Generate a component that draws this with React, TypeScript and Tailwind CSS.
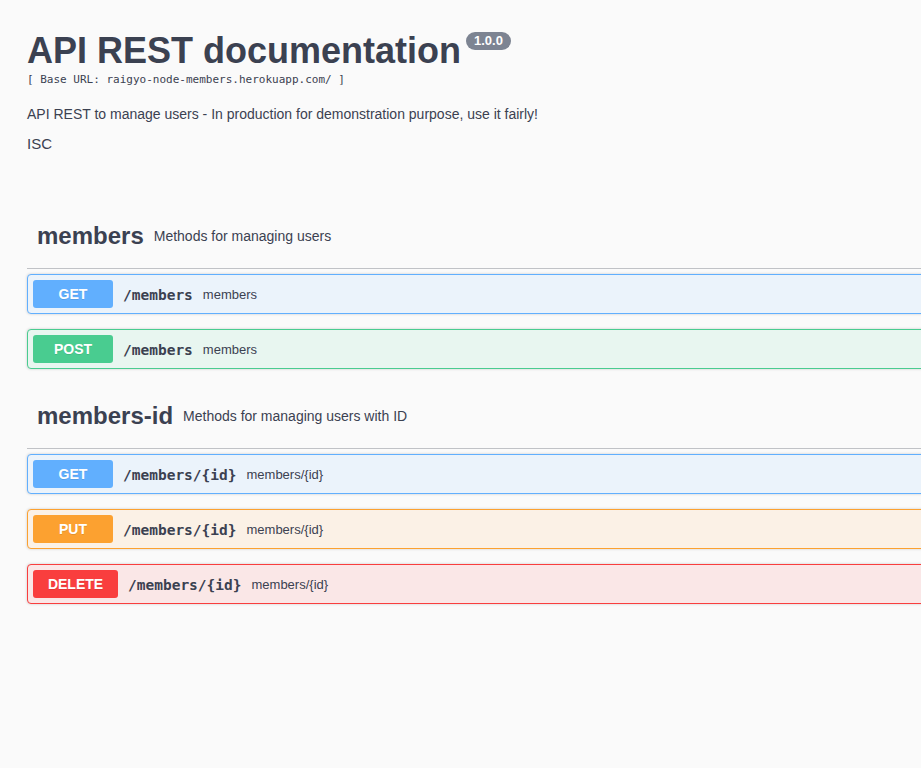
import React from "react";

type Method = "GET" | "POST" | "PUT" | "DELETE";

interface Operation {
  method: Method;
  path: string;
  summary: string;
}

interface Tag {
  name: string;
  description: string;
  operations: Operation[];
}

const methodStyles: Record<Method, { block: string; badge: string }> = {
  GET: { block: "border-[#61affe] bg-[#ebf3fb]", badge: "bg-[#61affe] w-[80px]" },
  POST: { block: "border-[#49cc90] bg-[#e8f6f0]", badge: "bg-[#49cc90] w-[80px]" },
  PUT: { block: "border-[#fca130] bg-[#fbf1e6]", badge: "bg-[#fca130] w-[80px]" },
  DELETE: { block: "border-[#f93e3e] bg-[#fae7e7]", badge: "bg-[#f93e3e] w-[85px]" },
};

const tags: Tag[] = [
  {
    name: "members",
    description: "Methods for managing users",
    operations: [
      { method: "GET", path: "/members", summary: "members" },
      { method: "POST", path: "/members", summary: "members" },
    ],
  },
  {
    name: "members-id",
    description: "Methods for managing users with ID",
    operations: [
      { method: "GET", path: "/members/{id}", summary: "members/{id}" },
      { method: "PUT", path: "/members/{id}", summary: "members/{id}" },
      { method: "DELETE", path: "/members/{id}", summary: "members/{id}" },
    ],
  },
];

const OperationBlock: React.FC<{ op: Operation }> = ({ op }) => {
  const style = methodStyles[op.method];
  return (
    <div
      className={`mb-[15px] h-[40px] flex items-center px-[5px] border rounded-[4px] shadow-[0_0_3px_rgba(0,0,0,0.19)] ${style.block}`}
    >
      <span
        className={`h-[28px] flex items-center justify-center rounded-[3px] text-white text-[14px] font-bold ${style.badge} [text-shadow:0_1px_0_rgba(0,0,0,0.1)]`}
      >
        {op.method}
      </span>
      <span className="mt-[4px] px-[10px] text-[14.5px] font-bold text-[#3b4151] font-['DejaVu_Sans_Mono',monospace]">
        {op.path}
      </span>
      <span className="mt-[2px] text-[13px] text-[#3b4151]">{op.summary}</span>
    </div>
  );
};

export default function App() {
  return (
    <div className="min-h-screen w-full overflow-hidden bg-[#fafafa] text-[#3b4151] font-['Liberation_Sans',Arial,sans-serif]">
      <div className="w-[1200px] pl-[27px]">
        {/* Info */}
        <div className="pt-[30px]">
          <div className="flex items-start">
            <h2 className="text-[36px] leading-[41px] font-bold text-[#3b4151]">API REST documentation</h2>
            <span className="ml-[5px] mt-[2px] h-[18px] px-[8px] rounded-full bg-[#7d8492] text-white text-[13px] font-bold leading-[18px]">
              1.0.0
            </span>
          </div>
          <p className="mt-[1px] text-[11px] leading-[15px] text-[#3b4151] font-['DejaVu_Sans_Mono',monospace]">
            [ Base URL: raigyo-node-members.herokuapp.com/ ]
          </p>
          <p className="mt-[18px] text-[14px] leading-[18px]">
            API REST to manage users - In production for demonstration purpose, use it fairly!
          </p>
          <p className="mt-[12px] text-[15px] leading-[18px]">ISC</p>
        </div>

        {/* Tags */}
        <div className="mt-[51px]">
          {tags.map((tag) => (
            <div key={tag.name}>
              <div className="h-[65px] mb-[5px] flex items-center pl-[10px] border-b border-[rgba(59,65,81,0.3)]">
                <h3 className="text-[24px] font-bold text-[#3b4151]">{tag.name}</h3>
                <span className="px-[10px] text-[14px] text-[#3b4151]">{tag.description}</span>
              </div>
              {tag.operations.map((op, i) => (
                <OperationBlock key={i} op={op} />
              ))}
            </div>
          ))}
        </div>
      </div>
    </div>
  );
}
